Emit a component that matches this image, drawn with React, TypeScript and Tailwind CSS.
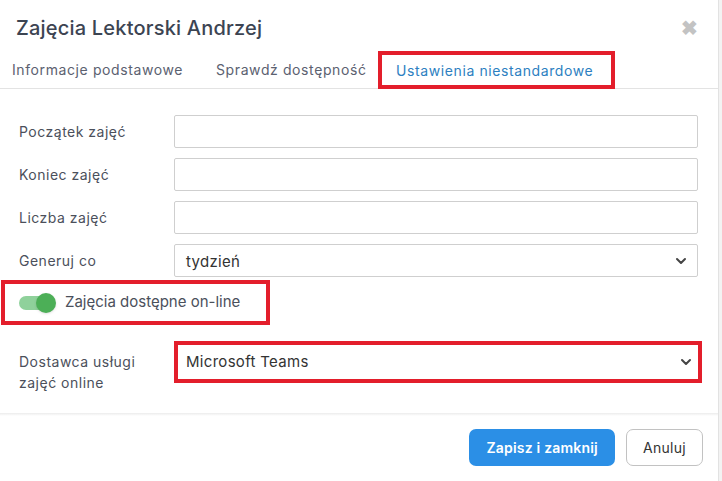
import React from "react";

const font = { fontFamily: "Inter, 'Noto Sans', sans-serif" };

function Chevron() {
  return (
    <svg width="12" height="8" viewBox="0 0 12 8" className="shrink-0">
      <path d="M2 2 L6 6 L10 2" fill="none" stroke="#444" strokeWidth="2" strokeLinecap="round" strokeLinejoin="round" />
    </svg>
  );
}

function Row({ label, children }: { label: React.ReactNode; children: React.ReactNode }) {
  return (
    <div className="flex items-center h-[33px]">
      <div className="w-[155px] text-[14px] tracking-[0.5px] text-[#4b505b]">{label}</div>
      <div className="flex-1">{children}</div>
    </div>
  );
}

export default function App() {
  return (
    <div className="w-[722px] h-[481px] bg-[#f3f3f3] overflow-hidden" style={font}>
      <div className="w-[719px] h-[481px] bg-white border-r border-[#e2e2e2] flex flex-col">
        <div className="flex items-center justify-between h-[51px] pt-[4px] pl-[16px] pr-[20px]">
          <h1 className="text-[20px] text-[#3c4452] font-medium tracking-[0.2px]">Zajęcia Lektorski Andrzej</h1>
          <span className="text-[#c3c3c3] text-[20px] font-bold leading-none">✖</span>
        </div>
        <div className="flex items-stretch h-[38px] border-b border-[#e3e3e3] text-[14px] tracking-[0.6px] text-[#5b6170]">
          <div className="pl-[12px] w-[204px] flex items-center">Informacje podstawowe</div>
          <div className="w-[174px] pl-[12px] flex items-center">Sprawdź dostępność</div>
          <div className="h-[38px] w-[237px] border-[4px] border-[#e31e2b] flex items-center pl-[14px] text-[#2d7fc1]">
            Ustawienia niestandardowe
          </div>
        </div>
        <div className="flex flex-col pl-[19px] pr-[20px] pt-[26px] gap-[10px]">
          <Row label="Początek zajęć"><div className="h-[33px] border border-[#cfcfcf] rounded-[2px]" /></Row>
          <Row label="Koniec zajęć"><div className="h-[33px] border border-[#cfcfcf] rounded-[2px]" /></Row>
          <Row label="Liczba zajęć"><div className="h-[33px] border border-[#cfcfcf] rounded-[2px]" /></Row>
          <Row label="Generuj co">
            <div className="h-[33px] border border-[#cfcfcf] rounded-[2px] flex items-center justify-between pl-[11px] pr-[10px] text-[15px] tracking-[0.3px] text-[#333]">
              <span className="pt-[3px]">tydzień</span>
              <Chevron />
            </div>
          </Row>
        </div>
        <div className="mt-[3px] ml-[1px] w-[269px] h-[45px] border-[4px] border-[#e31e2b] flex items-center pl-[14px] gap-[10px]">
          <div className="relative w-[36px] h-[14px] rounded-full bg-[#8fd19b]">
            <div className="absolute right-[-1px] top-[-3px] w-[20px] h-[20px] rounded-full bg-[#4caf57] shadow" />
          </div>
          <span className="text-[15px] text-[#4b505b]">Zajęcia dostępne on-line</span>
        </div>
        <div className="flex items-start pl-[19px] pr-[20px] mt-[16px]">
          <div className="w-[155px] text-[14px] tracking-[0.5px] leading-[21px] text-[#4b505b] pt-[10px]">Dostawca usługi<br />zajęć online</div>
          <div className="flex-1 mr-[-4px] h-[42px] border-[4px] border-[#e31e2b] flex items-center justify-between pl-[8px] pr-[6px] text-[15px] tracking-[0.3px] text-[#333]">
            <span>Microsoft Teams</span>
            <Chevron />
          </div>
        </div>
        <div className="mt-[20px] h-[3px] bg-gradient-to-b from-[#ececec] to-white" />
        <div className="flex justify-end gap-[11px] pr-[15px] pt-[13px]">
          <button className="h-[37px] px-[17px] rounded-[7px] bg-[#2b8fe6] text-white text-[14px] font-semibold tracking-[0.2px]">Zapisz i zamknij</button>
          <button className="h-[37px] w-[77px] rounded-[7px] border border-[#c2c2c2] text-[#333] text-[14px] tracking-[0.3px]">Anuluj</button>
        </div>
      </div>
    </div>
  );
}
